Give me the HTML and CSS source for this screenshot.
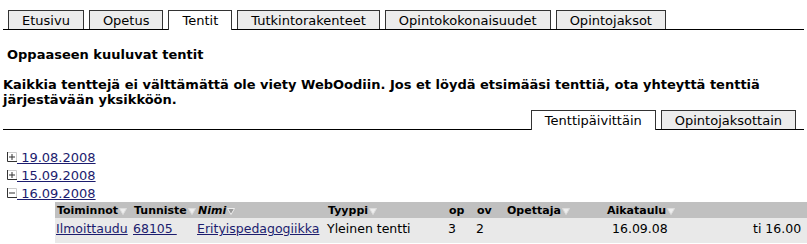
FILE: index.html
```html
<!DOCTYPE html>
<html lang="fi">
<head>
<meta charset="UTF-8">
<title>Tentit</title>
<link rel="stylesheet" href="styles.css">
</head>
<body>

<div class="tabs">
  <span class="tab">Etusivu</span>
  <span class="tab">Opetus</span>
  <span class="tab active">Tentit</span>
  <span class="tab">Tutkintorakenteet</span>
  <span class="tab">Opintokokonaisuudet</span>
  <span class="tab">Opintojaksot</span>
</div>

<h3 class="title">Oppaaseen kuuluvat tentit</h3>

<p class="notice">Kaikkia tenttejä ei välttämättä ole viety WebOodiin. Jos et löydä etsimääsi tenttiä, ota yhteyttä tenttiä järjestävään yksikköön.</p>

<div class="tabs subtabs">
  <span class="tab active">Tenttipäivittäin</span>
  <span class="tab">Opintojaksottain</span>
</div>

<ul class="dates">
  <li>
    <svg class="toggle" width="10" height="10" viewBox="0 0 10 10"><path d="M0.5 0.5h9v9" fill="none" stroke="#ccc"/><path d="M0.5 0v9.5h9.5" fill="none" stroke="#333"/><path d="M2 5h6M5 2v6" stroke="#333"/></svg><a href="#">&nbsp;19.08.2008</a>
  </li>
  <li>
    <svg class="toggle" width="10" height="10" viewBox="0 0 10 10"><path d="M0.5 0.5h9v9" fill="none" stroke="#ccc"/><path d="M0.5 0v9.5h9.5" fill="none" stroke="#333"/><path d="M2 5h6M5 2v6" stroke="#333"/></svg><a href="#">&nbsp;15.09.2008</a>
  </li>
  <li>
    <svg class="toggle" width="10" height="10" viewBox="0 0 10 10"><path d="M0.5 0.5h9v9" fill="none" stroke="#ccc"/><path d="M0.5 0v9.5h9.5" fill="none" stroke="#333"/><path d="M2 5h6" stroke="#333"/></svg><a href="#">&nbsp;16.09.2008</a>
  </li>
</ul>

<table class="exams">
  <colgroup>
    <col style="width:77px"><col style="width:64px"><col style="width:130px"><col style="width:121px">
    <col style="width:28px"><col style="width:30px"><col style="width:100px"><col style="width:147px"><col style="width:80px">
  </colgroup>
  <thead>
    <tr>
      <th>Toiminnot<svg class="sort" width="8" height="8" viewBox="0 0 8 8"><path d="M0.5 1.5h7L4 7.5z" fill="#eee" stroke="#ddd"/></svg></th>
      <th>Tunniste<svg class="sort" width="8" height="8" viewBox="0 0 8 8"><path d="M0.5 1.5h7L4 7.5z" fill="#eee" stroke="#ddd"/></svg></th>
      <th><i>Nimi</i><svg class="sort" width="8" height="8" viewBox="0 0 8 8"><path d="M0.5 1.5h7L4 7.5z" fill="#999" stroke="#eee"/></svg></th>
      <th>Tyyppi<svg class="sort" width="8" height="8" viewBox="0 0 8 8"><path d="M0.5 1.5h7L4 7.5z" fill="#eee" stroke="#ddd"/></svg></th>
      <th>op</th>
      <th>ov</th>
      <th>Opettaja<svg class="sort" width="8" height="8" viewBox="0 0 8 8"><path d="M0.5 1.5h7L4 7.5z" fill="#eee" stroke="#ddd"/></svg></th>
      <th>Aikataulu<svg class="sort" width="8" height="8" viewBox="0 0 8 8"><path d="M0.5 1.5h7L4 7.5z" fill="#eee" stroke="#ddd"/></svg></th>
      <th></th>
    </tr>
  </thead>
  <tbody>
    <tr>
      <td><a href="#">Ilmoittaudu</a></td>
      <td><a href="#">68105&nbsp;</a></td>
      <td><a href="#">Erityispedagogiikka</a></td>
      <td>Yleinen tentti</td>
      <td class="num">3</td>
      <td class="num">2</td>
      <td></td>
      <td class="date">16.09.08</td>
      <td>ti 16.00</td>
    </tr>
  </tbody>
</table>

</body>
</html>
```

FILE: styles.css
```css
body {
  margin: 0;
  padding: 10px 0 0 0;
  font-family: "DejaVu Sans", Verdana, sans-serif;
  font-size: 13px;
  color: #000;
  background: #fff;
  overflow: hidden;
}
a {
  color: #1c1c6e;
}
.tabs {
  display: flex;
  gap: 5px;
  margin: 0 3px;
  padding-left: 5px;
  border-bottom: 1px solid #000;
  align-items: flex-end;
}
.tab {
  background: #ececec;
  border: 1px solid #333;
  border-bottom: none;
  padding: 1px 13px 0 13px;
  line-height: 17px;
}
.tab.active {
  background: #fff;
  margin-bottom: -1px;
  padding-bottom: 1px;
}
.title {
  font-size: 13px;
  margin: 17px 0 0 7px;
}
.notice {
  font-weight: bold;
  margin: 15px 0 0 3px;
  line-height: 15px;
  width: 800px;
}
.subtabs {
  justify-content: flex-end;
  padding-right: 8px;
  margin-top: 3px;
}
.dates {
  list-style: none;
  margin: 18px 0 0 7px;
  padding: 0;
}
.dates li {
  height: 18px;
  display: flex;
  align-items: center;
}
.exams {
  margin-left: 55px;
  border-collapse: collapse;
  table-layout: fixed;
  width: 777px;
  font-size: 12.5px;
}
.exams th {
  background: #c0c0c0;
  font-size: 11px;
  text-align: left;
  padding: 1px 2px;
  height: 14px;
  white-space: nowrap;
}
.exams td {
  background: #e9e9e9;
  padding: 3px 1px 7px 1px;
  white-space: nowrap;
  overflow: hidden;
}
.sort {
  margin-left: 1px;
  vertical-align: -1px;
}
.num {
  padding-left: 6px;
}
.exams td.date {
  padding-left: 7px;
}
```
